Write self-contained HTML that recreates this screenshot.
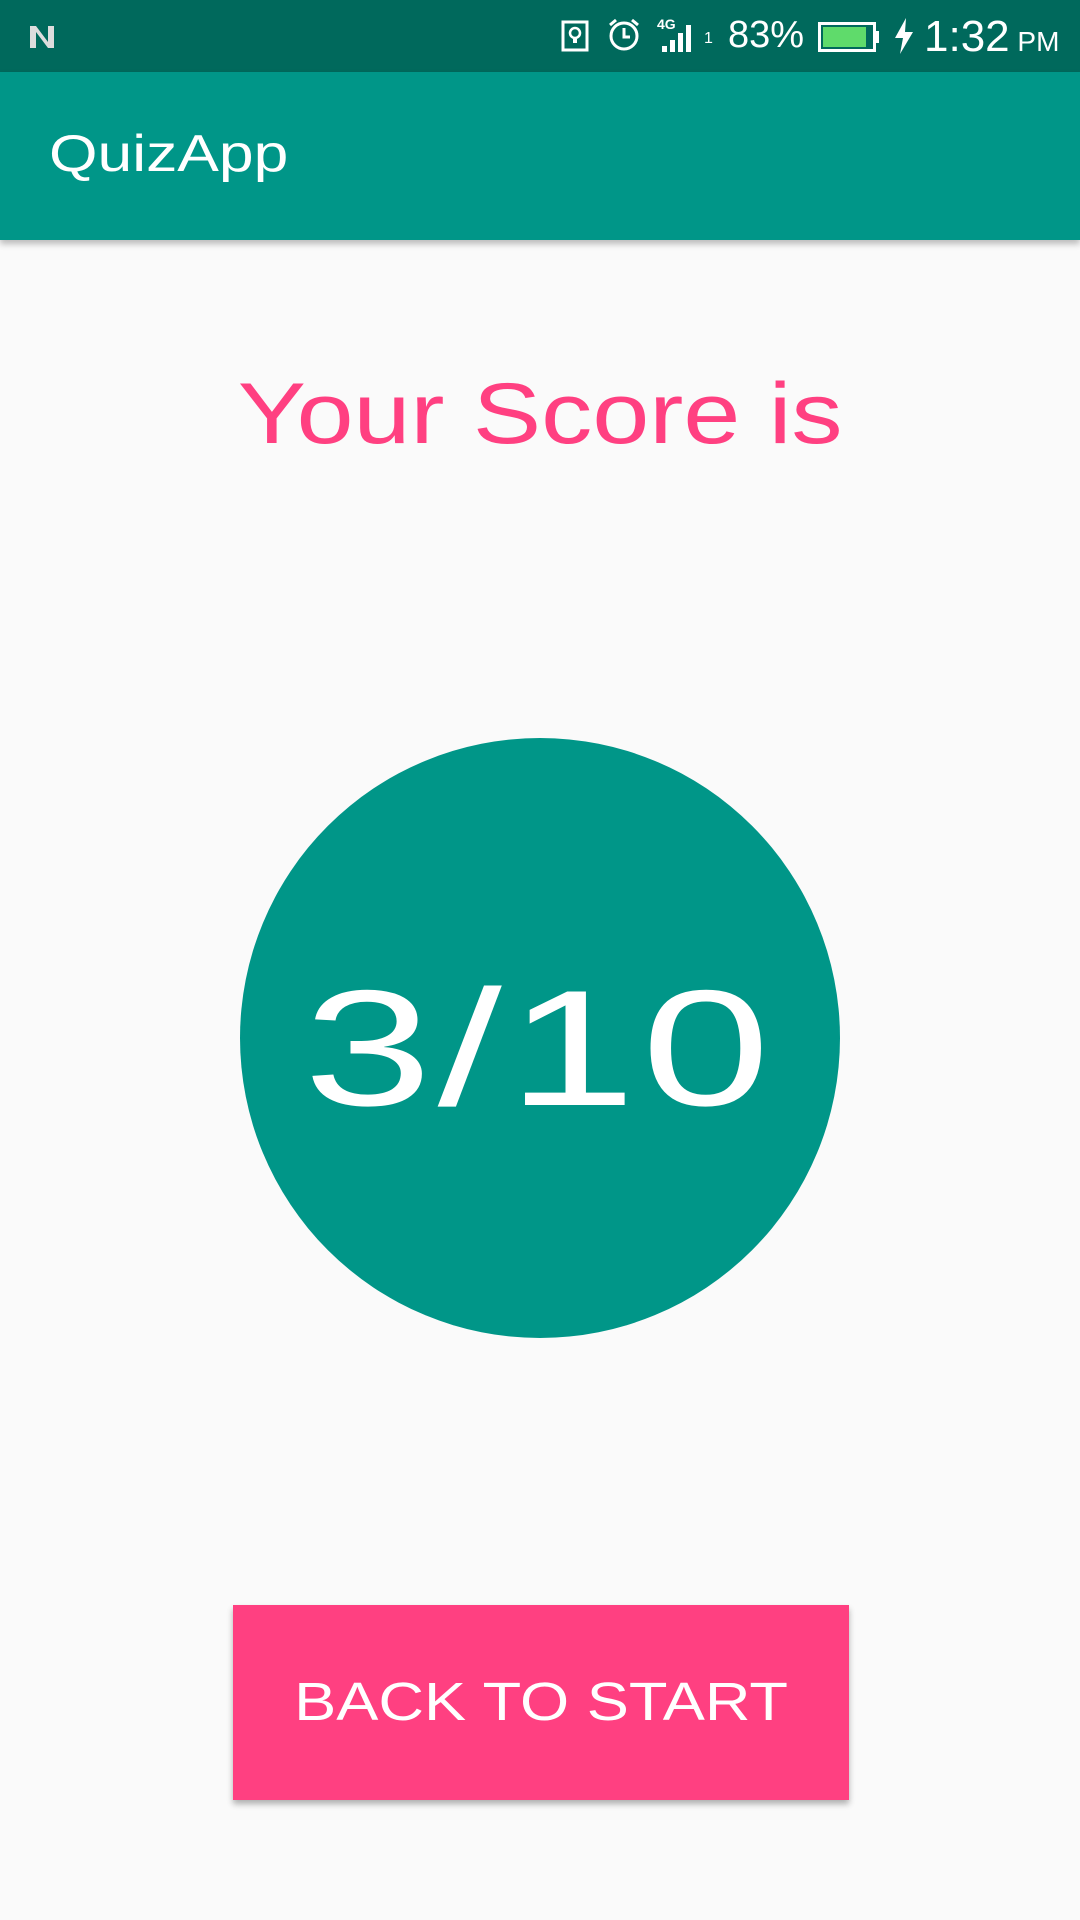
<!DOCTYPE html>
<html><head><meta charset="utf-8"><style>
html,body{margin:0;padding:0;width:1080px;height:1920px;background:#FAFAFA;font-family:"Liberation Sans",sans-serif;overflow:hidden;position:relative}
.sb{position:absolute;left:0;top:0;width:1080px;height:72px;background:#00695C;color:#fff}
.ab{position:absolute;left:0;top:72px;width:1080px;height:168px;background:#009688;box-shadow:0 4px 6px rgba(0,0,0,0.25)}
.ab span{position:absolute;left:49px;top:52px;font-size:52px;color:#fff;transform:scaleX(1.2);transform-origin:left center;display:inline-block}
.title{position:absolute;left:0;width:1080px;top:365px;text-align:center;font-size:86px;color:#FF4081}
.title span,.circle span,.btn span{display:inline-block}
.title span{transform:scaleX(1.19)}
.circle{position:absolute;left:240px;top:738px;width:600px;height:600px;border-radius:50%;background:#009688;color:#fff;font-size:165px;text-align:center;line-height:620px}
.circle span{transform:scaleX(1.4);letter-spacing:4px}
.btn{position:absolute;left:233px;top:1605px;width:616px;height:195px;background:#FF4081;color:#fff;font-size:54px;text-align:center;line-height:195px;box-shadow:0 4px 6px rgba(0,0,0,0.3)}
.btn span{transform:scaleX(1.17)}
</style></head><body>
<div class="sb">
<svg style="position:absolute;left:28px;top:24px" width="28" height="26" viewBox="0 0 28 26"><path d="M2 24V2h6l12 16V2h6v22h-6L8 8v16z" fill="#ddd"/></svg>
<svg style="position:absolute;left:561px;top:20px" width="28" height="32" viewBox="0 0 28 32"><rect x="2" y="2" width="24" height="28" fill="none" stroke="#fff" stroke-width="3"/><circle cx="14" cy="13" r="5" fill="none" stroke="#fff" stroke-width="2.5"/><path d="M12 19h4v4h-4z" fill="#fff"/></svg>
<svg style="position:absolute;left:607px;top:18px" width="34" height="34" viewBox="0 0 34 34"><circle cx="17" cy="18" r="13" fill="none" stroke="#fff" stroke-width="3"/><path d="M17 10v9h6" fill="none" stroke="#fff" stroke-width="3"/><path d="M3 7l6-5M31 7l-6-5" stroke="#fff" stroke-width="3"/></svg>
<div style="position:absolute;left:657px;top:16px;font-size:14px;font-weight:bold">4G</div>
<svg style="position:absolute;left:660px;top:22px" width="44" height="32" viewBox="0 0 44 32"><rect x="2" y="24" width="5" height="6" fill="#fff"/><rect x="10" y="18" width="5" height="12" fill="#fff"/><rect x="18" y="11" width="5" height="19" fill="#fff"/><rect x="26" y="3" width="5" height="27" fill="#fff"/></svg>
<div style="position:absolute;left:704px;top:30px;font-size:16px">1</div>
<div style="position:absolute;left:728px;top:14px;font-size:38px">83%</div>
<svg style="position:absolute;left:818px;top:22px" width="62" height="30" viewBox="0 0 62 30"><rect x="1.5" y="1.5" width="55" height="27" fill="none" stroke="#fff" stroke-width="3"/><rect x="5" y="5" width="43" height="20" fill="#5FDB6B"/><rect x="57" y="9" width="4" height="12" fill="#fff"/></svg>
<svg style="position:absolute;left:893px;top:18px" width="22" height="36" viewBox="0 0 22 36"><path d="M13 0L2 20h8l-3 16L20 14h-8z" fill="#fff"/></svg>
<div style="position:absolute;left:924px;top:12px;font-size:44px">1:32<span style="font-size:28px"> PM</span></div>
</div>
<div class="ab"><span>QuizApp</span></div>
<div class="title"><span>Your Score is</span></div>
<div class="circle"><span>3/10</span></div>
<div class="btn"><span>BACK TO START</span></div>
</body></html>
